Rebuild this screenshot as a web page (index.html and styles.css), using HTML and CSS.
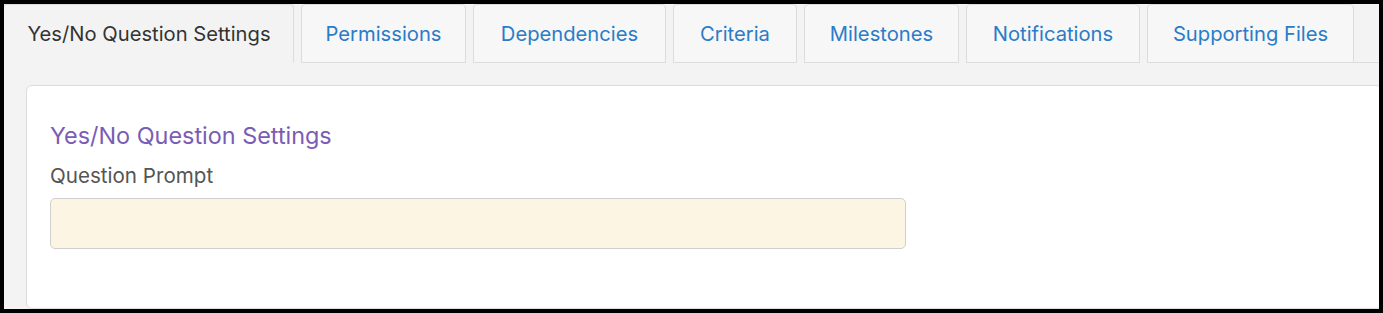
FILE: index.html
```html
<!DOCTYPE html>
<html lang="en">
<head>
<meta charset="utf-8">
<title>Yes/No Question Settings</title>
<link rel="stylesheet" href="styles.css">
</head>
<body>
  <div class="frame">
    <ul class="tabs">
      <li class="tab active tab-settings">Yes/No Question Settings</li>
      <li class="tab tab-permissions">Permissions</li>
      <li class="tab tab-dependencies">Dependencies</li>
      <li class="tab tab-criteria">Criteria</li>
      <li class="tab tab-milestones">Milestones</li>
      <li class="tab tab-notifications">Notifications</li>
      <li class="tab tab-files">Supporting Files</li>
      <li class="tab-fill"></li>
    </ul>
    <div class="pane">
      <div class="card">
        <h3 class="card-title">Yes/No Question Settings</h3>
        <label class="field-label">Question Prompt</label>
        <div class="field-input"></div>
      </div>
    </div>
  </div>
</body>
</html>
```

FILE: styles.css
```css
html, body {
  margin: 0;
  padding: 0;
}
body {
  background: #000;
  padding: 4px 4px 4px 4px;
  width: 1383px;
  height: 313px;
  box-sizing: border-box;
  font-family: Inter, "Open Sans", sans-serif;
}
.frame {
  width: 1375px;
  height: 305px;
  background: #f3f3f3;
  overflow: hidden;
}
.tabs {
  list-style: none;
  margin: 0;
  padding: 0;
  display: flex;
  height: 59px;
  gap: 7px;
}
.tab {
  box-sizing: border-box;
  flex: none;
  display: flex;
  align-items: center;
  justify-content: center;
  padding: 0 0 1px 0;
  background: #f7f7f7;
  border: 1px solid #dcdcdc;
  border-radius: 4px 4px 0 0;
  color: #2a7cc7;
  font-size: 20.2px;
  white-space: nowrap;
}
.tab.active {
  background: #f3f3f3;
  color: #333;
  border-bottom-color: transparent;
  margin-left: -1px;
  padding-left: 1px;
}
.tab-settings { width: 291px; }
.tab-permissions { width: 165px; }
.tab-dependencies { width: 193px; }
.tab-criteria { width: 124px; }
.tab-milestones { width: 155px; }
.tab-notifications { width: 174px; }
.tab-files { width: 207px; }
.tab-fill {
  flex: 1;
  border-bottom: 1px solid #dcdcdc;
  margin-left: -7px;
}
.pane {
  padding: 22px 0 0 22px;
}
.card {
  box-sizing: border-box;
  width: 1356px;
  height: 224px;
  background: #fff;
  border: 1px solid #dcdcdc;
  border-radius: 6px;
  padding: 35px 23px 0 23px;
}
.card-title {
  margin: 0 0 12px;
  font-size: 23.4px;
  line-height: 30px;
  font-weight: 400;
  color: #7b5cb4;
}
.field-label {
  display: block;
  margin: 0 0 9px;
  font-size: 20.6px;
  line-height: 26px;
  color: #555;
}
.field-input {
  box-sizing: border-box;
  width: 856px;
  height: 51px;
  background: #fdf5e3;
  border: 1px solid #cfcfcf;
  border-radius: 5px;
}
```
